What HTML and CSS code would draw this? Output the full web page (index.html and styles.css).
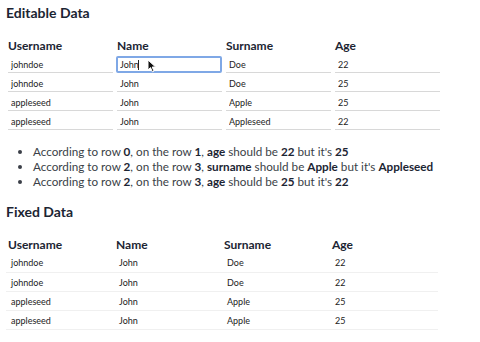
FILE: index.html
```html
<!DOCTYPE html>
<html lang="en">
<head>
  <meta charset="UTF-8">
  <title>Data validation</title>
  <link rel="stylesheet" href="styles.css">
</head>
<body>
  <h2 class="title">Editable Data</h2>
  <table class="grid editable">
    <thead>
      <tr><th>Username</th><th>Name</th><th>Surname</th><th>Age</th></tr>
    </thead>
    <tbody>
      <tr>
        <td><input value="johndoe"></td>
        <td class="focus-cell"><input class="focused" value="John"><span class="caret"></span>
          <svg class="pointer" width="10" height="14" viewBox="0 0 10 14"><path d="M1 1 L1 11 L3.5 8.6 L5.4 12.8 L7 12.1 L5.2 8 L8.6 8 Z" fill="#111" stroke="#fff" stroke-width="1"/></svg>
        </td>
        <td><input value="Doe"></td>
        <td><input value="22"></td>
      </tr>
      <tr>
        <td><input value="johndoe"></td>
        <td><input value="John"></td>
        <td><input value="Doe"></td>
        <td><input value="25"></td>
      </tr>
      <tr>
        <td><input value="appleseed"></td>
        <td><input value="John"></td>
        <td><input value="Apple"></td>
        <td><input value="25"></td>
      </tr>
      <tr>
        <td><input value="appleseed"></td>
        <td><input value="John"></td>
        <td><input value="Appleseed"></td>
        <td><input value="22"></td>
      </tr>
    </tbody>
  </table>

  <ul class="errors">
    <li>According to row <b>0</b>, on the row <b>1</b>, <b>age</b> should be <b>22</b> but it's <b>25</b></li>
    <li>According to row <b>2</b>, on the row <b>3</b>, <b>surname</b> should be <b>Apple</b> but it's <b>Appleseed</b></li>
    <li>According to row <b>2</b>, on the row <b>3</b>, <b>age</b> should be <b>25</b> but it's <b>22</b></li>
  </ul>

  <h2 class="title">Fixed Data</h2>
  <table class="grid fixed">
    <thead>
      <tr><th>Username</th><th>Name</th><th>Surname</th><th>Age</th></tr>
    </thead>
    <tbody>
      <tr><td>johndoe</td><td>John</td><td>Doe</td><td>22</td></tr>
      <tr><td>johndoe</td><td>John</td><td>Doe</td><td>22</td></tr>
      <tr><td>appleseed</td><td>John</td><td>Apple</td><td>25</td></tr>
      <tr><td>appleseed</td><td>John</td><td>Apple</td><td>25</td></tr>
    </tbody>
  </table>
</body>
</html>
```

FILE: styles.css
```css
body {
  margin: 0;
  padding: 4px 6px;
  font-family: 'Lato', sans-serif;
  background-color: #fff;
  color: #1c2533;
}
.title {
  margin: 0;
  font-size: 14px;
  font-weight: 700;
  line-height: 18px;
  color: #1c2533;
}
.grid {
  border-collapse: collapse;
  table-layout: fixed;
}
.grid th {
  text-align: left;
  font-size: 12px;
  font-weight: 700;
  padding: 0 0 0 2px;
  height: 16px;
  vertical-align: bottom;
}
.editable {
  margin-top: 15px;
}
.editable th {
  width: 107px;
}
.editable tbody td {
  padding: 1px 0 2px 2px;
  position: relative;
}
.editable tbody tr:first-child td {
  padding-top: 3px;
}
.editable input {
  display: block;
  box-sizing: border-box;
  width: 105px;
  height: 16px;
  border: none;
  border-bottom: 1px solid #d8d8d8;
  padding: 0 3px;
  font-family: 'Lato', sans-serif;
  font-size: 9px;
  color: #222;
  background: transparent;
}
.editable input.focused {
  border: 2px solid #7fa8e6;
  border-radius: 2px;
  padding: 0 2px 0 2px;
  height: 17px;
  width: 106px;
  margin-left: -1px;
}
.caret {
  position: absolute;
  left: 23px;
  top: 7px;
  width: 1px;
  height: 10px;
  background: #222;
}
.pointer {
  position: absolute;
  left: 32px;
  top: 6px;
}
.errors {
  margin: 12px 0 0;
  padding-left: 27px;
  font-size: 11.7px;
  line-height: 15px;
  color: #3a3f47;
}
.errors b {
  color: #1c2533;
}
.errors + .title {
  margin-top: 14px;
}
.fixed {
  margin-top: 15px;
}
.fixed th {
  width: 106px;
}
.fixed tbody td {
  font-size: 9px;
  color: #222;
  height: 18px;
  padding: 0 0 0 5px;
  border-bottom: 1px solid #f0f0f0;
}
.fixed tbody tr:first-child td {
  height: 19px;
  padding-top: 1px;
}
```
